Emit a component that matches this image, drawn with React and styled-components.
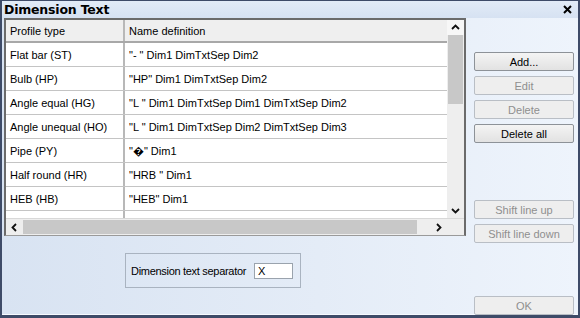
import React from "react";
import styled, { createGlobalStyle } from "styled-components";

const GlobalStyle = createGlobalStyle`
  html, body {
    margin: 0;
    padding: 0;
    background: #ffffff;
  }
  body {
    font-family: "Liberation Sans", Arial, sans-serif;
    font-size: 11px;
    color: #000;
  }
`;

const rows = [
  ["Flat bar (ST)", "\"- \" Dim1 DimTxtSep Dim2"],
  ["Bulb (HP)", "\"HP\" Dim1 DimTxtSep Dim2"],
  ["Angle equal (HG)", "\"L \" Dim1 DimTxtSep Dim1 DimTxtSep Dim2"],
  ["Angle unequal (HO)", "\"L \" Dim1 DimTxtSep Dim2 DimTxtSep Dim3"],
  ["Pipe (PY)", "\"\uFFFD\" Dim1"],
  ["Half round (HR)", "\"HRB \" Dim1"],
  ["HEB (HB)", "\"HEB\" Dim1"],
  ["", ""],
];

const Window = styled.div`
  width: 580px;
  height: 318px;
  box-sizing: border-box;
  border: 2px solid #3e4b68;
  border-top-width: 1px;
  border-bottom-width: 3px;
  display: flex;
  flex-direction: column;
  background: linear-gradient(90deg, #d8e3f2 0%, #e4ecf7 55%, #eef4fc 100%);
  overflow: hidden;
`;

const TitleBar = styled.div`
  height: 18px;
  display: flex;
  align-items: center;
  justify-content: space-between;
  padding: 0 6px 0 2px;
  background: linear-gradient(180deg, #e2ebf7 0%, #d6e2f2 100%);
`;

const Title = styled.span`
  font-family: "DejaVu Sans", Verdana, sans-serif;
  font-weight: bold;
  font-size: 12.5px;
  letter-spacing: -0.2px;
`;

const Body = styled.div`
  flex: 1;
  display: flex;
  box-shadow: inset 0 -1px 0 #f7faff;
`;

const LeftCol = styled.div`
  width: 462px;
  padding-left: 2px;
  display: flex;
  flex-direction: column;
`;

const ListBox = styled.div`
  height: 218px;
  box-sizing: border-box;
  border: 2px solid #6b6b6b;
  border-bottom: 1px solid #9a9a9a;
  background: #fff;
  display: grid;
  grid-template-columns: 1fr 17px;
  grid-template-rows: 1fr 17px;
  overflow: hidden;
`;

const Table = styled.div`
  overflow: hidden;
  display: flex;
  flex-direction: column;
`;

const Row = styled.div`
  display: grid;
  grid-template-columns: 117px 1fr;
  height: ${(p) => (p.$head ? 21 : 23)}px;
  flex-shrink: 0;
  border-bottom: ${(p) => (p.$head ? "2px solid #a8a8a8" : "1px solid #c4c4c4")};
  background: ${(p) => (p.$head ? "#efefef" : "#fff")};
`;

const Cell = styled.div`
  display: flex;
  align-items: center;
  padding-left: 4px;
  white-space: nowrap;
  overflow: hidden;
  font-size: 11px;
  & + & {
    border-left: 2px solid #b8b8b8;
  }
`;

const VScroll = styled.div`
  background: #eeeeee;
  display: flex;
  flex-direction: column;
  align-items: stretch;
`;

const ArrowBox = styled.div`
  height: ${(p) => p.$size || 16}px;
  width: ${(p) => p.$w || "auto"};
  display: flex;
  align-items: center;
  justify-content: center;
  background: ${(p) => (p.$light ? "#f7f7f7" : "transparent")};
  flex-shrink: 0;
`;

const VThumb = styled.div`
  height: 69px;
  margin: 0 1px;
  background: #c8c8c8;
`;

const Spacer = styled.div`
  flex: 1;
`;

const HScroll = styled.div`
  background: #eeeeee;
  display: flex;
  align-items: stretch;
  border-top: 1px solid #d8d8d8;
`;

const HThumb = styled.div`
  width: 394px;
  margin: 1px 0;
  background: #c8c8c8;
`;

const Corner = styled.div`
  background: #eeeeee;
  border-top: 1px solid #d8d8d8;
`;

const Chevron = ({ dir }) => {
  const pts = {
    up: "1,6 4.5,2.5 8,6",
    down: "1,3 4.5,6.5 8,3",
    left: "6,1 2.5,4.5 6,8",
    right: "3,1 6.5,4.5 3,8",
  }[dir];
  return (
    <svg width="9" height="9" viewBox="0 0 9 9">
      <polyline points={pts} fill="none" stroke="#111" strokeWidth="1.8" />
    </svg>
  );
};

const BottomArea = styled.div`
  flex: 1;
  display: flex;
  align-items: flex-start;
  padding: 17px 0 0 121px;
`;

const GroupBox = styled.div`
  width: 176px;
  height: 35px;
  box-sizing: border-box;
  border: 1px solid #a9b3c0;
  display: flex;
  align-items: center;
  gap: 8px;
  padding-left: 5px;
`;

const Label = styled.span`
  font-size: 11px;
  letter-spacing: -0.3px;
  white-space: nowrap;
  flex-shrink: 0;
`;

const Input = styled.div`
  width: 39px;
  height: 16px;
  flex-shrink: 0;
  box-sizing: border-box;
  border: 1px solid #9aa3ad;
  background: #fff;
  font-size: 11px;
  padding-left: 3px;
  line-height: 14px;
`;

const RightCol = styled.div`
  flex: 1;
  display: flex;
  flex-direction: column;
  padding: 29px 0 0 8px;
`;

const Button = styled.div`
  width: 100px;
  height: 19px;
  box-sizing: border-box;
  border: 1px solid ${(p) => (p.$disabled ? "#b9bec5" : "#8d9298")};
  border-radius: 2px;
  background: ${(p) =>
    p.$disabled
      ? "#eeeeee"
      : "linear-gradient(180deg, #f4f4f4 0%, #e2e2e2 100%)"};
  color: ${(p) => (p.$disabled ? "#8f8f8f" : "#000")};
  display: flex;
  align-items: center;
  justify-content: center;
  font-size: 11px;
  margin-top: ${(p) => p.$mt || 5}px;
`;

export default function App() {
  return (
    <>
      <GlobalStyle />
      <Window>
        <TitleBar>
          <Title>Dimension Text</Title>
          <svg width="9" height="9" viewBox="0 0 9 9">
            <path d="M1,1 L8,8 M8,1 L1,8" stroke="#000" strokeWidth="2" />
          </svg>
        </TitleBar>
        <Body>
          <LeftCol>
            <ListBox>
              <Table>
                <Row $head>
                  <Cell>Profile type</Cell>
                  <Cell>Name definition</Cell>
                </Row>
                {rows.map(([a, b], i) => (
                  <Row key={i}>
                    <Cell>{a}</Cell>
                    <Cell>{b}</Cell>
                  </Row>
                ))}
              </Table>
              <VScroll>
                <ArrowBox $light $size={15}>
                  <Chevron dir="up" />
                </ArrowBox>
                <VThumb />
                <Spacer />
                <ArrowBox $size={15}>
                  <Chevron dir="down" />
                </ArrowBox>
              </VScroll>
              <HScroll>
                <ArrowBox $w="17px">
                  <Chevron dir="left" />
                </ArrowBox>
                <HThumb />
                <Spacer />
                <ArrowBox $w="17px">
                  <Chevron dir="right" />
                </ArrowBox>
              </HScroll>
              <Corner />
            </ListBox>
            <BottomArea>
              <GroupBox>
                <Label>Dimension text separator</Label>
                <Input>X</Input>
              </GroupBox>
            </BottomArea>
          </LeftCol>
          <RightCol>
            <Button>Add...</Button>
            <Button $disabled>Edit</Button>
            <Button $disabled>Delete</Button>
            <Button>Delete all</Button>
            <Button $disabled $mt={57}>Shift line up</Button>
            <Button $disabled>Shift line down</Button>
            <Button $disabled $mt={53}>OK</Button>
          </RightCol>
        </Body>
      </Window>
    </>
  );
}
